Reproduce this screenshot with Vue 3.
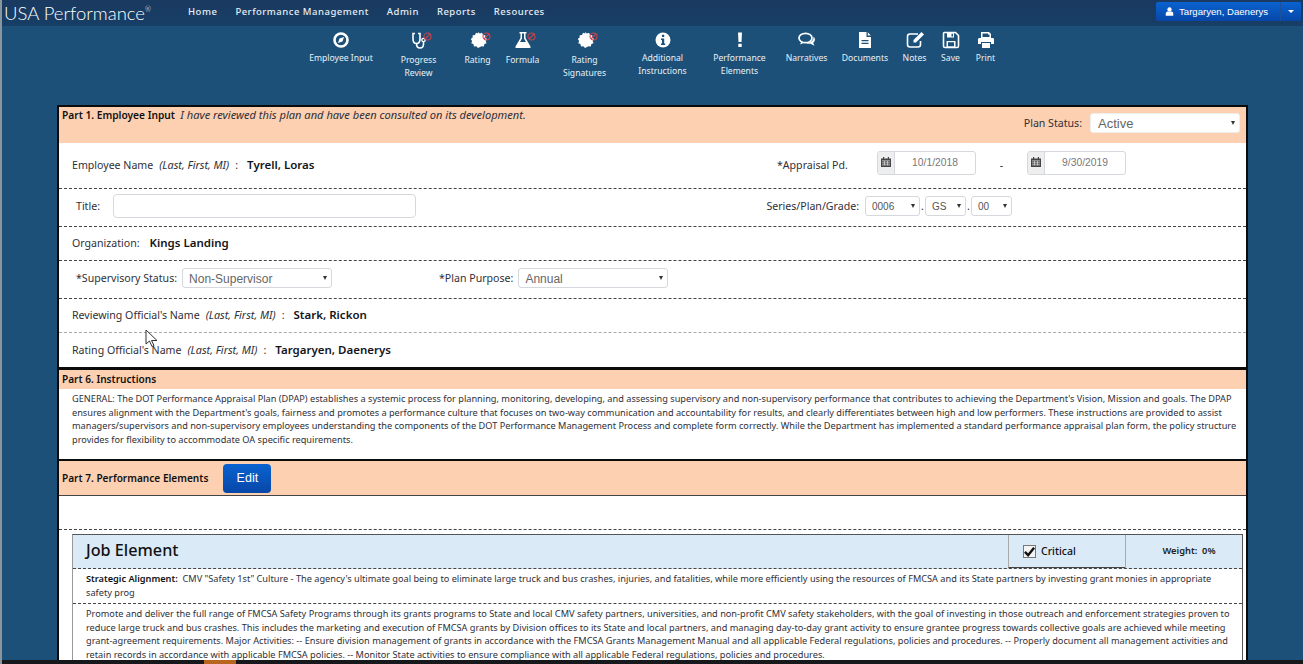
<script setup>
const navLinks = ['Home', 'Performance Management', 'Admin', 'Reports', 'Resources']

// width of each toolbar slot, taken from where the labels sit
const tools = [
  { icon: 'compass', label: ['Employee Input'], w: 81 },
  { icon: 'stethoscope', label: ['Progress', 'Review'], w: 74, off: true },
  { icon: 'badge', label: ['Rating'], w: 44, off: true },
  { icon: 'flask', label: ['Formula'], w: 46, off: true },
  { icon: 'badge', label: ['Rating', 'Signatures'], w: 78, off: true },
  { icon: 'info', label: ['Additional', 'Instructions'], w: 78 },
  { icon: 'bang', label: ['Performance', 'Elements'], w: 76 },
  { icon: 'comments', label: ['Narratives'], w: 58 },
  { icon: 'file', label: ['Documents'], w: 59 },
  { icon: 'edit', label: ['Notes'], w: 40 },
  { icon: 'save', label: ['Save'], w: 32 },
  { icon: 'print', label: ['Print'], w: 38 }
]

const instructions = [
  "GENERAL: The DOT Performance Appraisal Plan (DPAP) establishes a systemic process for planning, monitoring, developing, and assessing supervisory and non-supervisory performance that contributes to achieving the Department's Vision, Mission and goals. The DPAP",
  "ensures alignment with the Department's goals, fairness and promotes a performance culture that focuses on two-way communication and accountability for results, and clearly differentiates between high and low performers. These instructions are provided to assist",
  'managers/supervisors and non-supervisory employees understanding the components of the DOT Performance Management Process and complete form correctly. While the Department has implemented a standard performance appraisal plan form, the policy structure',
  'provides for flexibility to accommodate OA specific requirements.'
]

const description = [
  'Promote and deliver the full range of FMCSA Safety Programs through its grants programs to State and local CMV safety partners, universities, and non-profit CMV safety stakeholders, with the goal of investing in those outreach and enforcement strategies proven to',
  'reduce large truck and bus crashes. This includes the marketing and execution of FMCSA grants by Division offices to its State and local partners, and managing day-to-day grant activity to ensure grantee progress towards collective goals are achieved while meeting',
  'grant-agreement requirements. Major Activities: -- Ensure division management of grants in accordance with the FMCSA Grants Management Manual and all applicable Federal regulations, policies and procedures. -- Properly document all management activities and',
  'retain records in accordance with applicable FMCSA policies. -- Monitor State activities to ensure compliance with all applicable Federal regulations, policies and procedures.'
]
</script>

<template>
  <div class="page">
    <header class="topbar">
      <div class="logo">USA Performance<sup>®</sup></div>
      <nav class="nav">
        <a v-for="link in navLinks" :key="link">{{ link }}</a>
      </nav>
      <div class="user-btn">
        <span class="user-main">
          <svg width="9" height="9" viewBox="0 0 12 12"><circle cx="6" cy="3.2" r="2.9" fill="#fff" /><path d="M1 11.500V9c0-2 1.500-3 2.500-3h5C9.500 6 11 7 11 9v2.500z" fill="#fff" /></svg>
          Targaryen, Daenerys
        </span>
        <span class="user-caret"></span>
      </div>
    </header>

    <div class="toolbar">
      <div v-for="tool in tools" :key="tool.label.join()" class="tool" :style="{ width: tool.w + 'px' }">
        <div class="tool-icon">
          <svg width="20" height="20" viewBox="0 0 20 20">
            <template v-if="tool.icon === 'compass'">
              <circle cx="10" cy="10" r="6.500" fill="none" stroke="#fff" stroke-width="2.600" />
              <path d="M13 7l-1.500 4.500L7 13l1.500-4.500z" fill="#fff" />
            </template>
            <template v-else-if="tool.icon === 'stethoscope'">
              <path d="M6 3.500H4v5.500c0 3 1.800 4.500 3.500 4.500S11 12 11 9V3.500H9" fill="none" stroke="#fff" stroke-width="1.600" />
              <path d="M7.500 13.500c0 3 1.500 4.500 3.500 4.500s3.500-1.500 3.500-4v-2.500" fill="none" stroke="#fff" stroke-width="1.600" />
              <circle cx="14.500" cy="10" r="1.700" fill="none" stroke="#fff" stroke-width="1.300" />
            </template>
            <template v-else-if="tool.icon === 'badge'">
              <path d="M10 2l1.800 1.500 2.200-.7 1 2.100 2.300.3-.1 2.300 1.800 1.500-1.300 2 .8 2.200-2.100.9-.6 2.300-2.300-.2L10 18l-1.700-1.800-2.300.2-.6-2.300-2.100-.9.800-2.200-1.300-2 1.800-1.500L4.700 5.200 7 4.900l1-2.100 2.200.7z" fill="#fff" />
            </template>
            <template v-else-if="tool.icon === 'flask'">
              <path d="M6.500 2h7v1.500h-1V8l5 8.500c.4.800 0 1.500-1 1.500H3.500c-1 0-1.400-.7-1-1.500l5-8.500V3.500h-1zM9 3.500V8.500L7 12h6l-2-3.500v-5z" fill="#fff" fill-rule="evenodd" />
            </template>
            <template v-else-if="tool.icon === 'info'">
              <circle cx="10" cy="10" r="7.500" fill="#fff" />
              <path d="M8 8.500h3.200v5h1v1.500H8v-1.500h1v-3.500H8zM9 4.800h2.200V7H9z" fill="#1c5078" />
            </template>
            <template v-else-if="tool.icon === 'bang'">
              <path d="M8 2.500h4L11.500 12h-3zM8.300 13.800h3.400v3.200H8.300z" fill="#fff" />
            </template>
            <template v-else-if="tool.icon === 'comments'">
              <ellipse cx="8.500" cy="8" rx="6.500" ry="4.700" fill="none" stroke="#fff" stroke-width="1.700" />
              <path d="M4.500 11.500L3 14.500l4-1.700" fill="#fff" />
              <path d="M16.500 6.500c1.800 1.500 2.200 4.500-.3 6.300l1.300 3-4-2c-1.500.2-3 0-4-.8 3.500.3 7.500-2 7-6.500z" fill="#fff" />
            </template>
            <template v-else-if="tool.icon === 'file'">
              <path d="M4 2h7.500v5H16v11H4zM12.800 2.300L15.800 5.500h-3zM6.500 10v1.300h7V10zM6.500 12.800v1.300h7v-1.300z" fill="#fff" fill-rule="evenodd" />
            </template>
            <template v-else-if="tool.icon === 'edit'">
              <path d="M13 4H5C3.500 4 2.500 5 2.500 6.500v8C2.500 16 3.500 17 5 17h8c1.500 0 2.500-1 2.500-2.500V11" fill="none" stroke="#fff" stroke-width="1.600" />
              <path d="M16.500 2l2.500 2.500-8 8H8.500V10z" fill="#fff" />
            </template>
            <template v-else-if="tool.icon === 'save'">
              <path d="M3.500 2.500h11l3 3v10.500c0 1-.5 1.500-1.500 1.500H4c-1 0-1.500-.5-1.500-1.500V3.500c0-.6.400-1 1-1z" fill="none" stroke="#fff" stroke-width="1.600" />
              <path d="M6 3h7v4.500H6zM5.500 11h9v6h-9z" fill="#fff" />
              <path d="M10.500 3.800h1.500v2.800h-1.500zM7 12.300h6v4H7z" fill="#1c5078" />
            </template>
            <template v-else>
              <path d="M5 2h8l2 2v4H5zM6.500 3.500V7h7V4.500h-1.500v-1z" fill="#fff" fill-rule="evenodd" />
              <path d="M3.500 8h13c1 0 1.500.6 1.500 1.500V14h-3v-2H5v2H2V9.500C2 8.600 2.500 8 3.500 8zM6 13h8v5H6z" fill="#fff" />
            </template>
          </svg>
          <svg v-if="tool.off" class="off-mark" width="9" height="9" viewBox="0 0 9 9">
            <circle cx="4.500" cy="4.500" r="3.500" fill="none" stroke="#c9434d" stroke-width="1.100" />
            <path d="M2 7L7 2" stroke="#c9434d" stroke-width="1.100" />
          </svg>
        </div>
        <div class="tool-label" :class="{ low: tool.off }">
          <div v-for="line in tool.label" :key="line">{{ line }}</div>
        </div>
      </div>
    </div>

    <main class="sheet">
      <section class="part-one-head">
        <p class="head-text"><b>Part 1. Employee Input</b>&nbsp; <i>I have reviewed this plan and have been consulted on its development.</i></p>
        <div class="status">
          <span>Plan Status:</span>
          <div class="fake-select status-select">Active<span class="arrow"></span></div>
        </div>
      </section>

      <div class="row row-employee">
        <div class="pair"><span>Employee Name</span><i>(Last, First, MI)</i><span>:</span><b>Tyrell, Loras</b></div>
        <div class="appraisal">
          <span class="appraisal-label">*Appraisal Pd.</span>
          <div class="date-box">
            <span class="date-icon"><svg width="10" height="10" viewBox="0 0 10 10"><path d="M0 1.500h10V10H0z" fill="#444" /><path d="M2 0h1.200v2H2zM6.800 0H8v2H6.800z" fill="#444" /><path d="M1 3.500h8v.7H1zM1 5.500h8v.7H1zM1 7.500h8v.7H1zM3 3.500h.7v5H3zM6 3.500h.7v5H6z" fill="#ddd" /></svg></span>
            <span class="date-value">10/1/2018</span>
          </div>
          <span class="date-dash">-</span>
          <div class="date-box">
            <span class="date-icon"><svg width="10" height="10" viewBox="0 0 10 10"><path d="M0 1.500h10V10H0z" fill="#444" /><path d="M2 0h1.200v2H2zM6.800 0H8v2H6.800z" fill="#444" /><path d="M1 3.500h8v.7H1zM1 5.500h8v.7H1zM1 7.500h8v.7H1zM3 3.500h.7v5H3zM6 3.500h.7v5H6z" fill="#ddd" /></svg></span>
            <span class="date-value">9/30/2019</span>
          </div>
        </div>
      </div>

      <div class="row row-title">
        <div class="title-field"><span>Title:</span><div class="text-input"></div></div>
        <div class="grade">
          <span class="grade-label">Series/Plan/Grade:</span>
          <div class="fake-select small w55">0006<span class="arrow"></span></div><span class="dot">.</span>
          <div class="fake-select small w41">GS<span class="arrow"></span></div><span class="dot">.</span>
          <div class="fake-select small w41">00<span class="arrow"></span></div>
        </div>
      </div>

      <div class="row row-org">
        <div class="pair"><span>Organization:</span><b class="org">Kings Landing</b></div>
      </div>

      <div class="row row-status">
        <div class="select-field first"><span>*Supervisory Status:</span><div class="fake-select mid w150">Non-Supervisor<span class="arrow"></span></div></div>
        <div class="select-field second"><span>*Plan Purpose:</span><div class="fake-select mid w150">Annual<span class="arrow"></span></div></div>
      </div>

      <div class="row row-official">
        <div class="pair"><span>Reviewing Official's Name</span><i>(Last, First, MI)</i><span>:</span><b>Stark, Rickon</b></div>
      </div>
      <div class="row row-official last">
        <div class="pair"><span>Rating Official's Name</span><i>(Last, First, MI)</i><span>:</span><b>Targaryen, Daenerys</b></div>
      </div>

      <section class="part-six">
        <h3>Part 6. Instructions</h3>
        <div class="copy instructions">
          <div v-for="line in instructions" :key="line">{{ line }}</div>
        </div>
      </section>

      <section class="part-seven">
        <h3>Part 7. Performance Elements</h3>
        <button class="edit-btn">Edit</button>
      </section>
      <div class="spacer"></div>

      <div class="element">
        <div class="element-head">
          <div class="element-name">Job Element</div>
          <div class="element-critical"><span class="check"><svg width="12" height="11" viewBox="0 0 12 11"><path d="M1 6l3.500 3.500L11 1.500" fill="none" stroke="#111" stroke-width="2.600" /></svg></span>Critical</div>
          <div class="element-weight">Weight: &nbsp;0%</div>
        </div>
        <div class="element-row copy align-row">
          <b>Strategic Alignment:</b>&nbsp; CMV "Safety 1st" Culture - The agency's ultimate goal being to eliminate large truck and bus crashes, injuries, and fatalities, while more efficiently using the resources of FMCSA and its State partners by investing grant monies in appropriate<br />safety prog
        </div>
        <div class="element-row copy">
          <div v-for="line in description" :key="line">{{ line }}</div>
        </div>
      </div>
    </main>

    <svg class="cursor" width="15" height="19" viewBox="0 0 15 19"><path d="M1 1v14l3.500-3 2.500 5.500 2-1-2.500-5H12z" fill="#fff" stroke="#333" stroke-width="1" /></svg>
    <div class="taskbar"><span></span></div>
  </div>
</template>

<style>
html, body {
  margin: 0;
  overflow: hidden;
}
</style>

<style scoped>
.page {
  position: relative;
  height: 664px;
  overflow: hidden;
  box-sizing: border-box;
  border-left: 2px solid #8b959e;
  background: #1c5078;
  font-family: "Noto Sans", sans-serif;
  color: #2f2f38;
  font-size: 10.600px;
}

.topbar {
  display: flex;
  align-items: center;
  height: 26px;
  background: linear-gradient(#1a3a60, #173e66);
  color: #fff;
}

.logo {
  width: 184px;
  padding-left: 2px;
  box-sizing: border-box;
  font-family: "Lato", sans-serif;
  font-size: 18.500px;
  font-weight: 300;
  white-space: nowrap;
}

.logo sup {
  font-size: 7px;
  vertical-align: 8px;
  line-height: 0;
}

.nav {
  display: flex;
  gap: 18px;
  padding-bottom: 3px;
  margin-left: 2px;
}

.nav a {
  font-size: 9.500px;
  font-weight: 500;
  letter-spacing: 0.5px;
  color: #e6edf3;
  white-space: nowrap;
}

.user-btn {
  display: flex;
  margin-left: auto;
  margin-right: 2px;
  margin-bottom: 3px;
  height: 19px;
  font-family: "Liberation Sans", sans-serif;
  font-size: 9.600px;
  border-radius: 2px;
  overflow: hidden;
  background: linear-gradient(#0a62d0, #0747a8);
  white-space: nowrap;
}

.user-main {
  display: flex;
  align-items: center;
  gap: 5px;
  width: 125px;
  padding-left: 9px;
  box-sizing: border-box;
  border-right: 1px solid #1a4f9a;
}

.user-caret {
  position: relative;
  width: 20px;
}

.user-caret::after {
  content: '';
  position: absolute;
  left: 7px;
  top: 8px;
  border: 3px solid transparent;
  border-top-color: #fff;
  border-bottom: 0;
}

.toolbar {
  display: flex;
  justify-content: center;
  height: 79px;
}

.tool {
  display: flex;
  flex-direction: column;
  align-items: center;
  padding-top: 4px;
  color: #e9f0f5;
  font-size: 8.600px;
  text-align: center;
  line-height: 13px;
}

.tool-icon {
  position: relative;
  width: 20px;
  height: 20px;
}

.off-mark {
  position: absolute;
  right: -3px;
  top: 2px;
}

.tool-label {
  margin-top: 2px;
  white-space: nowrap;
}

.tool-label.low {
  margin-top: 4px;
}

.sheet {
  margin-left: 55px;
  width: 1187px;
  border: 2px solid #0b0b0b;
  border-bottom: 0;
  background: #fff;
}

.part-one-head {
  display: flex;
  justify-content: space-between;
  height: 36px;
  background: #fdd0b1;
}

.head-text {
  margin: 0 0 0 3px;
  font-size: 10.200px;
}

.head-text b {
  font-weight: 600;
  color: #111;
}

.head-text i {
  font-size: 11.100px;
}

.status {
  display: flex;
  align-items: center;
  gap: 8px;
  height: 22px;
  margin: 5px 6px 0 0;
}

.fake-select {
  position: relative;
  box-sizing: border-box;
  background: #fff;
  border: 1px solid #d5d8dc;
  border-radius: 3px;
  font-family: "Liberation Sans", sans-serif;
  color: #666;
}

.arrow {
  position: absolute;
  right: 4px;
  top: 50%;
  margin-top: -2px;
  border: 2.500px solid transparent;
  border-top: 4px solid #333;
  border-bottom: 0;
}

.status-select {
  width: 150px;
  height: 20px;
  padding-left: 7px;
  font-size: 13px;
  line-height: 20px;
  border-color: #eee;
}

.row {
  display: flex;
  align-items: center;
  box-sizing: border-box;
  border-bottom: 1px dashed #444;
}

.row-employee {
  justify-content: space-between;
  height: 46px;
  padding: 0 0 2px 13px;
}

.pair {
  display: flex;
  align-items: baseline;
  gap: 6px;
  white-space: nowrap;
}

.pair i {
  font-size: 10.800px;
}

.pair b {
  margin-left: 3px;
  font-size: 11.500px;
  font-weight: 600;
  color: #14141a;
}

.pair b.org {
  margin-left: 4px;
}

.appraisal {
  display: flex;
  align-items: flex-start;
  margin-right: 120px;
}

.appraisal-label {
  width: 100px;
  padding-top: 7px;
}

.date-box {
  display: flex;
  box-sizing: border-box;
  width: 99px;
  height: 24px;
  margin-bottom: 4px;
  border: 1px solid #d5d8dc;
  border-radius: 3px;
  overflow: hidden;
  font-family: "Liberation Sans", sans-serif;
  font-size: 10.300px;
  color: #777;
}

.date-icon {
  display: flex;
  justify-content: center;
  padding-top: 5px;
  box-sizing: border-box;
  width: 17px;
  background: #eee;
  border-right: 1px solid #d5d8dc;
}

.date-value {
  flex: 1;
  text-align: center;
  line-height: 22px;
}

.date-dash {
  width: 51px;
  padding-top: 7px;
  text-align: center;
}

.row-title {
  justify-content: space-between;
  height: 38px;
  padding: 0 0 3px 17px;
}

.title-field {
  display: flex;
  align-items: center;
  gap: 13px;
}

.text-input {
  box-sizing: border-box;
  width: 303px;
  height: 24px;
  border: 1px solid #d5d8dc;
  border-radius: 4px;
}

.grade {
  display: flex;
  align-items: center;
  margin-right: 234px;
}

.grade-label {
  margin-right: 6px;
}

.small {
  height: 20px;
  padding-left: 6px;
  font-size: 10px;
  line-height: 19px;
  color: #555;
}

.w55 { width: 55px; }
.w41 { width: 41px; }
.w150 { width: 150px; }

.dot {
  width: 5px;
  text-align: center;
}

.row-org {
  height: 34px;
  padding: 0 0 2px 13px;
}

.row-status {
  height: 38px;
  padding: 0 0 4px 17px;
}

.select-field {
  display: flex;
  align-items: center;
  gap: 5px;
}

.select-field.first {
  width: 363px;
}

.mid {
  height: 20px;
  padding-left: 6px;
  font-size: 12px;
  line-height: 20px;
}

.row-official {
  height: 34px;
  padding: 0 0 2px 13px;
  border-bottom-color: #aaa;
}

.row-official.last {
  border-bottom: 0;
}

.part-six {
  border-top: 3px solid #0b0b0b;
}

h3 {
  margin: 0;
  font-size: 10.100px;
  font-weight: 600;
  color: #111;
}

.part-six h3 {
  height: 19px;
  padding-left: 3px;
  line-height: 19px;
  background: #fdd0b1;
}

.copy {
  font-size: 9.200px;
  line-height: 13.600px;
  white-space: nowrap;
}

.instructions {
  height: 70px;
  padding: 3px 0 0 13px;
  box-sizing: border-box;
}

.part-seven {
  display: flex;
  align-items: center;
  gap: 15px;
  box-sizing: border-box;
  height: 37px;
  padding-left: 3px;
  background: #fdd0b1;
  border-top: 2px solid #0b0b0b;
  border-bottom: 1px solid #444;
}

.edit-btn {
  width: 48px;
  height: 29px;
  padding: 0;
  border: 0;
  border-radius: 4px;
  background: linear-gradient(#0a62d0, #0747a8);
  color: #fff;
  font-family: "Liberation Sans", sans-serif;
  font-size: 12.500px;
}

.spacer {
  height: 33px;
  border-bottom: 1px dashed #444;
}

.element {
  margin: 4px 3px 0 13px;
  border: 1px solid #555;
  border-left-color: #999;
}

.element-head {
  display: flex;
  height: 33px;
  background: #daeaf6;
  border-bottom: 1px dashed #444;
}

.element-name {
  flex: 1;
  padding-left: 13px;
  font-size: 16.200px;
  font-weight: 500;
  line-height: 31px;
  color: #111;
}

.element-critical {
  display: flex;
  align-items: center;
  gap: 5px;
  width: 117px;
  padding-left: 14px;
  box-sizing: border-box;
  border-left: 1px solid #aaa;
  border-bottom: 1px solid #444;
  font-size: 10.500px;
  font-weight: 500;
  color: #111;
}

.check {
  display: flex;
  align-items: center;
  justify-content: center;
  box-sizing: border-box;
  width: 13px;
  height: 13px;
  border: 1px solid #777;
  background: #f4f4f4;
}

.element-weight {
  width: 117px;
  box-sizing: border-box;
  padding-left: 10px;
  border-left: 1px solid #aaa;
  text-align: center;
  font-size: 9.300px;
  font-weight: 600;
  line-height: 31px;
  color: #222;
}

.element-row {
  padding: 3px 0 3px 13px;
  border-bottom: 1px dashed #444;
}

.align-row {
  padding-bottom: 4px;
}

.element-row b {
  font-weight: 600;
  color: #111;
}

.cursor {
  position: absolute;
  left: 143px;
  top: 329px;
}

.taskbar {
  position: absolute;
  left: -2px;
  right: 0;
  bottom: 0;
  height: 4px;
  background: #16181c;
}

.taskbar span {
  position: absolute;
  left: 204px;
  width: 32px;
  height: 4px;
  background: #b7651f;
}
</style>
